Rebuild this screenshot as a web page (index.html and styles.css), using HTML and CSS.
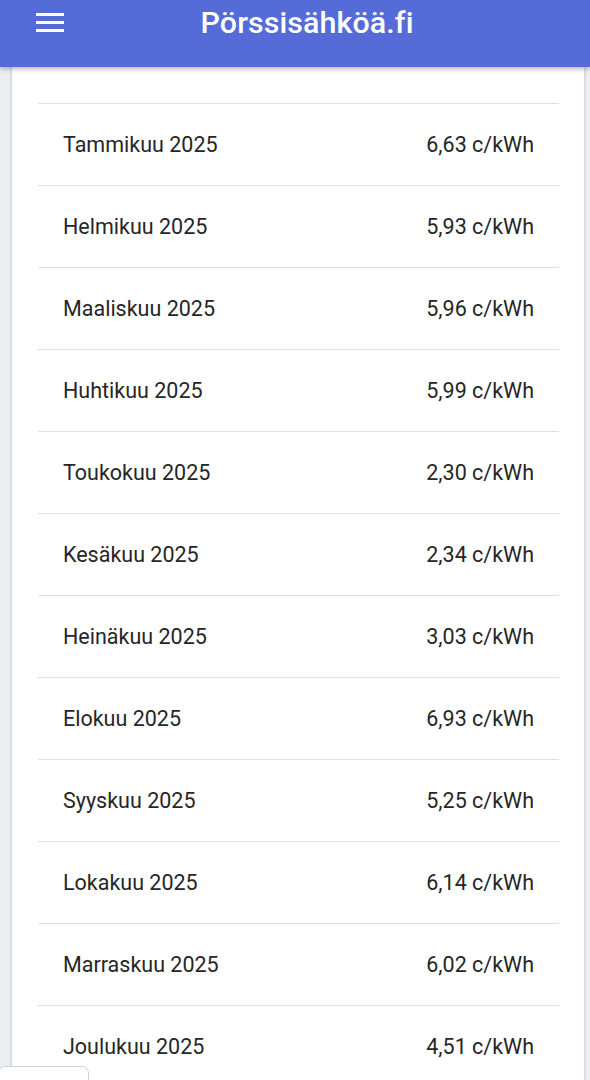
FILE: index.html
```html
<!DOCTYPE html>
<html lang="fi">
<head>
<meta charset="utf-8">
<title>Pörssisähköä.fi</title>
<link rel="stylesheet" href="styles.css">
</head>
<body>
<header class="topbar">
  <button class="menu" aria-label="Valikko">
    <svg width="30" height="20" viewBox="0 0 30 20"><rect x="0" y="0" width="28" height="3" fill="#fff"/><rect x="0" y="8" width="28" height="3" fill="#fff"/><rect x="0" y="16" width="28" height="3" fill="#fff"/></svg>
  </button>
  <h1 class="title">Pörssisähköä.fi</h1>
</header>
<main class="card">
  <ul class="list">
    <li class="row"><span>Tammikuu 2025</span><span>6,63 c/kWh</span></li>
    <li class="row"><span>Helmikuu 2025</span><span>5,93 c/kWh</span></li>
    <li class="row"><span>Maaliskuu 2025</span><span>5,96 c/kWh</span></li>
    <li class="row"><span>Huhtikuu 2025</span><span>5,99 c/kWh</span></li>
    <li class="row"><span>Toukokuu 2025</span><span>2,30 c/kWh</span></li>
    <li class="row"><span>Kesäkuu 2025</span><span>2,34 c/kWh</span></li>
    <li class="row"><span>Heinäkuu 2025</span><span>3,03 c/kWh</span></li>
    <li class="row"><span>Elokuu 2025</span><span>6,93 c/kWh</span></li>
    <li class="row"><span>Syyskuu 2025</span><span>5,25 c/kWh</span></li>
    <li class="row"><span>Lokakuu 2025</span><span>6,14 c/kWh</span></li>
    <li class="row"><span>Marraskuu 2025</span><span>6,02 c/kWh</span></li>
    <li class="row"><span>Joulukuu 2025</span><span>4,51 c/kWh</span></li>
  </ul>
</main>
<div class="floater"></div>
</body>
</html>
```
FILE: styles.css
```css
html, body {
  margin: 0;
  padding: 0;
  height: 1080px;
  overflow: hidden;
}
body {
  background: #eceef2;
  font-family: Roboto, "Noto Sans", sans-serif;
  color: #262626;
  position: relative;
}
.topbar {
  position: relative;
  z-index: 2;
  height: 67px;
  background: #556bd7;
  display: flex;
  align-items: flex-start;
  justify-content: center;
  box-shadow: 0 2px 5px rgba(0,0,0,0.28);
}
.menu {
  position: absolute;
  left: 36px;
  top: 13px;
  padding: 0;
  border: 0;
  background: transparent;
  width: 30px;
  height: 20px;
  display: flex;
}
.title {
  margin: 0;
  margin-top: 4px;
  margin-left: 24px;
  font-size: 30.4px;
  font-weight: 500;
  line-height: 38px;
  color: #ffffff;
  letter-spacing: 0.1px;
}
.card {
  background: #ffffff;
  margin: 0 6px 0 12px;
  padding: 36px 25px 0 26px;
  box-shadow: 0 0 3px rgba(0,0,0,0.25);
  height: 1013px;
  overflow: hidden;
}
.list {
  list-style: none;
  margin: 0;
  padding: 0;
}
.row {
  height: 81px;
  border-top: 1px solid #e0e0e0;
  display: flex;
  align-items: center;
  justify-content: space-between;
  padding: 0 25px;
  font-size: 21.5px;
}
.floater {
  position: absolute;
  left: -2px;
  top: 1066px;
  width: 89px;
  height: 30px;
  background: #fff;
  border: 1px solid #cfd2d6;
  border-radius: 7px;
  z-index: 3;
}
```
